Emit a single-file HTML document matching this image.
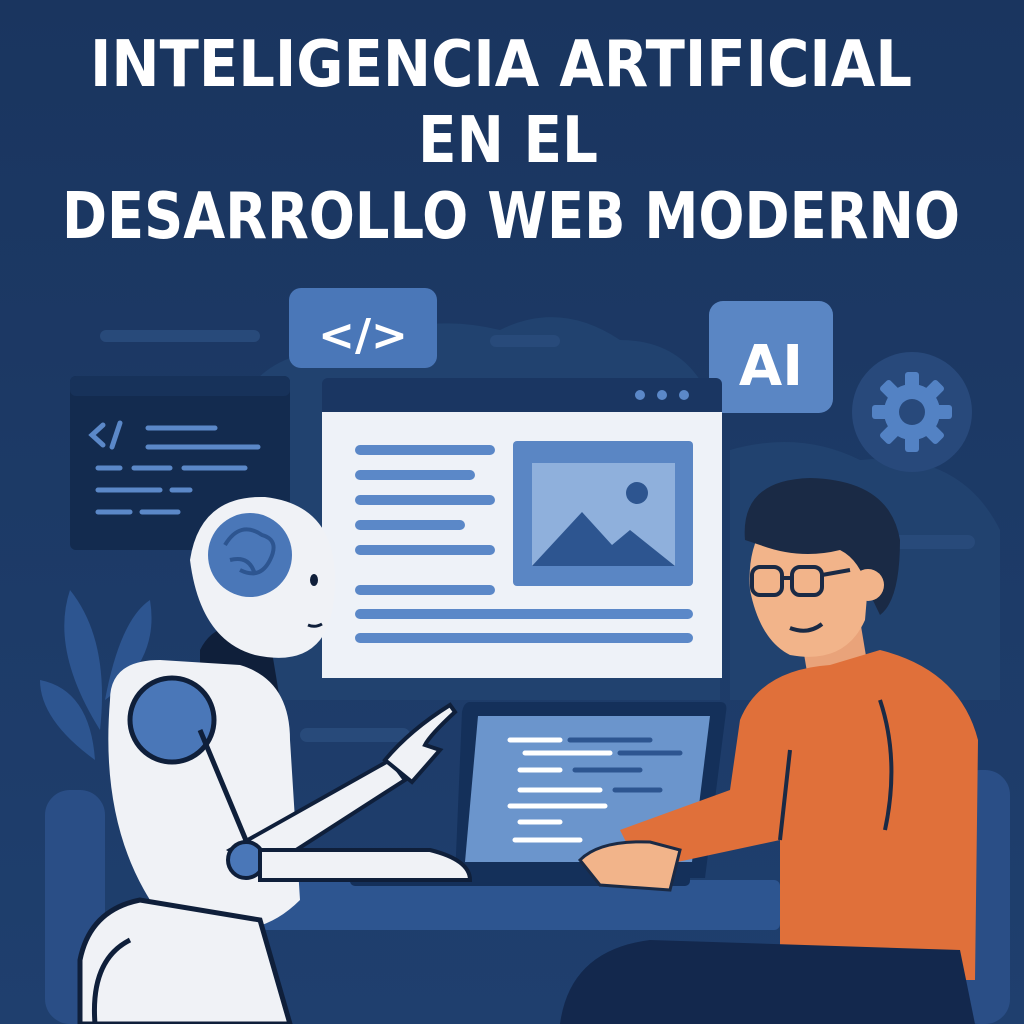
<!DOCTYPE html>
<html><head><meta charset="utf-8"><style>
html,body{margin:0;padding:0;background:#1c3a66;}
svg{display:block}
</style></head><body>
<svg width="1024" height="1024" viewBox="0 0 1024 1024" xmlns="http://www.w3.org/2000/svg">
<defs><linearGradient id="bg" x1="0" y1="0" x2="0" y2="1"><stop offset="0" stop-color="#1a355f"/><stop offset="1" stop-color="#1f3f6e"/></linearGradient></defs>
<rect width="1024" height="1024" fill="url(#bg)"/>
<!-- soft background blobs -->
<path d="M230 430 Q250 350 340 350 Q420 310 500 330 Q560 300 620 340 Q700 340 720 430 L720 700 L230 700Z" fill="#21426f"/>
<path d="M730 450 Q800 430 860 460 Q960 450 1000 530 L1000 700 L730 700Z" fill="#21426f"/>
<rect x="100" y="330" width="160" height="12" rx="6" fill="#284a7a"/>
<rect x="490" y="335" width="70" height="12" rx="6" fill="#284a7a"/>
<rect x="870" y="535" width="105" height="14" rx="7" fill="#284a7a"/>
<rect x="300" y="728" width="110" height="14" rx="7" fill="#284a7a"/>
<!-- title -->
<g font-family="DejaVu Sans, Liberation Sans, sans-serif" font-weight="bold" fill="#fff" font-size="64">
<text x="90" y="86" textLength="822" lengthAdjust="spacingAndGlyphs">INTELIGENCIA ARTIFICIAL</text>
<text x="418" y="162" textLength="180" lengthAdjust="spacingAndGlyphs">EN EL</text>
<text x="62" y="238" textLength="898" lengthAdjust="spacingAndGlyphs">DESARROLLO WEB MODERNO</text>
</g>
<!-- left code panel -->
<rect x="70" y="376" width="220" height="174" rx="6" fill="#132b4f"/>
<rect x="70" y="376" width="220" height="20" rx="6" fill="#17325a"/>
<g stroke="#5b88c8" stroke-width="5" stroke-linecap="round" fill="none">
<path d="M103 425 L92 435 L103 445 M120 423 L112 447"/>
<path d="M148 428 H215 M148 447 H258 M98 468 H120 M134 468 H170 M184 468 H245 M98 490 H160 M172 490 H190 M98 512 H130 M142 512 H178"/>
</g>
<!-- code icon box -->
<rect x="289" y="288" width="148" height="80" rx="12" fill="#4a77b8"/>
<text x="363" y="350" text-anchor="middle" font-family="DejaVu Sans, sans-serif" font-weight="bold" font-size="44" fill="#fff">&lt;/&gt;</text>
<!-- AI box -->
<rect x="709" y="301" width="124" height="112" rx="14" fill="#5a86c4"/>
<text x="771" y="385" text-anchor="middle" font-family="DejaVu Sans, sans-serif" font-weight="bold" font-size="56" fill="#fff">AI</text>
<!-- gear -->
<circle cx="912" cy="412" r="60" fill="#28497b"/>
<g fill="#5382c4" transform="translate(912,412)">
<circle r="28"/>
<g><rect x="-7" y="-40" width="14" height="80" rx="3"/><rect x="-7" y="-40" width="14" height="80" rx="3" transform="rotate(45)"/><rect x="-7" y="-40" width="14" height="80" rx="3" transform="rotate(90)"/><rect x="-7" y="-40" width="14" height="80" rx="3" transform="rotate(135)"/></g>
<circle r="13" fill="#28497b"/>
</g>
<!-- browser -->
<rect x="322" y="378" width="400" height="300" rx="6" fill="#1a3662"/>
<circle cx="640" cy="395" r="5" fill="#5b88c8"/><circle cx="662" cy="395" r="5" fill="#5b88c8"/><circle cx="684" cy="395" r="5" fill="#5b88c8"/>
<rect x="322" y="412" width="400" height="266" fill="#eef2f8"/>
<rect x="513" y="441" width="180" height="145" rx="4" fill="#5a86c4"/>
<rect x="532" y="463" width="143" height="103" fill="#8fb0dc"/>
<path d="M532 566 L582 512 L612 545 L630 530 L675 566Z" fill="#2d5590"/>
<circle cx="637" cy="493" r="11" fill="#2d5590"/>
<g stroke="#5b88c8" stroke-width="10" stroke-linecap="round">
<path d="M360 450 H490 M360 475 H470 M360 500 H490 M360 525 H460 M360 550 H490 M360 590 H490 M360 614 H688 M360 638 H688"/>
</g>
<!-- plant -->
<g fill="#2d5590">
<path d="M100 730 Q50 650 70 590 Q110 640 100 730Z"/>
<path d="M105 700 Q120 620 150 600 Q160 660 105 700Z"/>
<path d="M95 760 Q40 720 40 680 Q90 690 95 760Z"/>
</g>
<!-- chairs -->
<rect x="45" y="790" width="60" height="234" rx="25" fill="#2a4e86"/>
<rect x="955" y="770" width="55" height="254" rx="25" fill="#2a4e86"/>
<!-- laptop -->
<path d="M470 702 H720 Q728 702 726 712 L705 878 H455 L462 712 Q464 702 470 702Z" fill="#14305a"/>
<path d="M478 716 H710 L692 862 H465Z" fill="#6b95cc"/>
<g stroke-width="5" stroke-linecap="round">
<path d="M510 740 H560 M525 753 H610 M520 770 H560 M520 790 H600 M510 806 H605 M520 822 H560 M515 840 H580" stroke="#fff"/>
<path d="M570 740 H650 M620 753 H680 M575 770 H640 M615 790 H660" stroke="#2d5590"/>
</g>
<!-- desk -->
<rect x="260" y="880" width="520" height="50" rx="6" fill="#2d5590"/>
<rect x="350" y="872" width="340" height="14" rx="5" fill="#14305a"/>
<!-- robot -->
<g>
<path d="M200 650 Q220 610 270 640 L280 700 L200 700Z" fill="#0f1f3a"/>
<path d="M110 700 Q110 660 160 660 L240 665 Q290 680 290 740 L300 900 Q240 960 150 900 Q100 820 110 700Z" fill="#f0f2f6"/>
<circle cx="172" cy="720" r="42" fill="#4a77b8" stroke="#0f1f3a" stroke-width="5"/>
<path d="M200 730 L250 850" stroke="#0f1f3a" stroke-width="5"/>
<path d="M230 850 L390 760 L405 780 L265 870Z" fill="#f0f2f6" stroke="#0f1f3a" stroke-width="4"/>
<path d="M385 760 Q410 730 450 705 L455 712 Q430 735 425 745 L440 750 L412 782Z" fill="#f0f2f6" stroke="#0f1f3a" stroke-width="4"/>
<circle cx="246" cy="860" r="18" fill="#4a77b8" stroke="#0f1f3a" stroke-width="4"/>
<path d="M260 850 H430 Q470 860 470 880 H260Z" fill="#f0f2f6" stroke="#0f1f3a" stroke-width="4"/>
<path d="M80 960 Q90 910 140 900 L260 920 L290 1024 H80Z" fill="#f0f2f6" stroke="#0f1f3a" stroke-width="5"/>
<path d="M95 1024 Q90 960 130 940" stroke="#0f1f3a" stroke-width="5" fill="none"/>
<path d="M190 560 Q200 495 265 497 Q335 505 335 580 Q335 620 320 640 Q300 665 255 655 Q200 640 190 560Z" fill="#f0f2f6"/>
<circle cx="250" cy="555" r="42" fill="#4a77b8"/>
<g stroke="#2d5590" stroke-width="4" fill="none"><path d="M225 545 Q240 520 262 535 Q280 540 270 560 Q260 580 240 570 M230 560 Q250 555 255 575"/></g>
<ellipse cx="314" cy="580" rx="4" ry="6" fill="#0f1f3a"/>
<path d="M308 625 Q315 628 322 624" stroke="#0f1f3a" stroke-width="3" fill="none"/>
</g>
<!-- person -->
<g>
<path d="M800 630 L860 620 L870 680 L810 690Z" fill="#e9a37a"/>
<path d="M750 590 Q745 520 800 500 Q860 495 870 560 L865 620 Q845 665 790 655 Q760 640 750 590Z" fill="#f2b48a"/>
<path d="M745 540 Q740 480 810 478 Q890 480 900 540 Q900 600 880 615 L868 590 Q860 560 840 550 Q800 560 760 545Z" fill="#1a2a45"/>
<circle cx="868" cy="585" r="16" fill="#f2b48a"/>
<g stroke="#1a2a45" stroke-width="4" fill="none"><rect x="752" y="567" width="30" height="28" rx="8"/><rect x="792" y="567" width="30" height="28" rx="8"/><path d="M782 578 H792 M822 575 L850 570"/></g>
<path d="M790 628 Q808 635 822 624" stroke="#1a2a45" stroke-width="4" fill="none"/>
<path d="M740 720 Q760 670 830 665 L880 650 Q960 670 978 740 L975 980 L780 980 L780 840 L640 870 L620 830 L730 790Z" fill="#e0703a"/>
<path d="M880 700 Q900 760 885 830 M780 840 L790 750" stroke="#1a2a45" stroke-width="4" fill="none"/>
<path d="M580 860 Q600 840 650 842 L680 850 L670 890 L600 885Z" fill="#f2b48a" stroke="#1a2a45" stroke-width="3"/>
<path d="M560 1024 Q570 950 650 940 L960 950 L975 1024Z" fill="#13284d"/>
</g>
</svg>
</body></html>
